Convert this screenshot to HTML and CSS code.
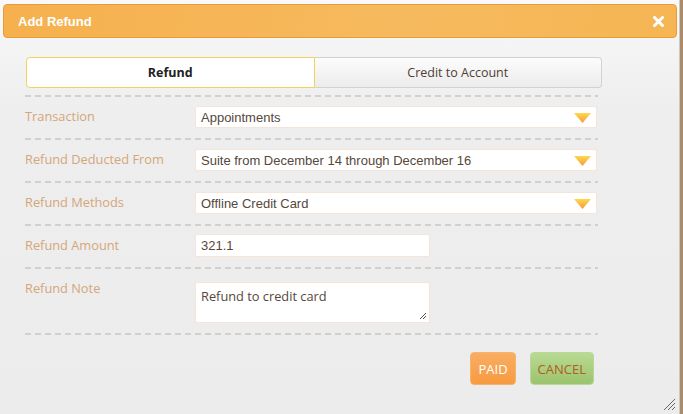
FILE: index.html
```html
<!DOCTYPE html>
<html lang="en">
<head>
    <meta charset="UTF-8">
    <title>Add Refund</title>
    <link rel="stylesheet" href="styles.css">
</head>
<body>
    <div class="dialog">
        <div class="titlebar">
            <span class="title">Add Refund</span>
            <svg class="close" width="11" height="11" viewBox="0 0 11 11">
                <path d="M1.5 1.5 L9.5 9.5 M9.5 1.5 L1.5 9.5" stroke="#fff" stroke-width="3" stroke-linecap="round"/>
            </svg>
        </div>

        <div class="content">
            <div class="tabs">
                <div class="tab active">Refund</div>
                <div class="tab">Credit to Account</div>
            </div>

            <div class="form">
                <div class="row">
                    <label>Transaction</label>
                    <div class="select">
                        <span>Appointments</span>
                        <svg class="arrow" width="17" height="10" viewBox="0 0 17 10"><use href="#tri"/></svg>
                    </div>
                </div>
                <div class="row">
                    <label>Refund Deducted From</label>
                    <div class="select">
                        <span>Suite from December 14 through December 16</span>
                        <svg class="arrow" width="17" height="10" viewBox="0 0 17 10"><use href="#tri"/></svg>
                    </div>
                </div>
                <div class="row">
                    <label>Refund Methods</label>
                    <div class="select">
                        <span>Offline Credit Card</span>
                        <svg class="arrow" width="17" height="10" viewBox="0 0 17 10"><use href="#tri"/></svg>
                    </div>
                </div>
                <div class="row">
                    <label>Refund Amount</label>
                    <div class="input">321.1</div>
                </div>
                <div class="row">
                    <label>Refund Note</label>
                    <div class="textarea">
                        Refund to credit card
                        <svg class="grip-small" width="8" height="8" viewBox="0 0 8 8">
                            <path d="M7 1 L1 7 M7 4 L4 7" stroke="#555" stroke-width="1"/>
                        </svg>
                    </div>
                </div>
                <div class="row last"></div>

                <div class="buttons">
                    <button class="btn paid">PAID</button>
                    <button class="btn cancel">CANCEL</button>
                </div>
            </div>
        </div>

        <svg class="grip" width="13" height="13" viewBox="0 0 13 13">
            <path d="M12 1 L1 12 M12 5 L5 12 M12 9 L9 12" stroke="#666" stroke-width="1"/>
        </svg>
    </div>

    <svg width="0" height="0" style="position:absolute">
        <defs>
            <linearGradient id="tg" x1="0" y1="0" x2="0" y2="1">
                <stop offset="0" stop-color="#ffd84a"/>
                <stop offset="1" stop-color="#f59a3e"/>
            </linearGradient>
            <path id="tri" d="M0 0 H17 L8.5 10 Z" fill="url(#tg)"/>
        </defs>
    </svg>
</body>
</html>
```

FILE: styles.css
```css
body {
    margin: 0;
    background-color: #a98d6b;
    font-family: "Open Sans", "Noto Sans", sans-serif;
}
.dialog {
    position: relative;
    width: 680px;
    height: 414px;
    box-sizing: border-box;
    padding-top: 4px;
    border-right: 1px solid #c9c9c9;
    background: linear-gradient(#f9f9f9, #eeeeee 110px, #ececec);
}
.titlebar {
    display: flex;
    align-items: center;
    justify-content: space-between;
    height: 34px;
    margin: 0 2px 0 3px;
    padding: 0 12px 0 14px;
    box-sizing: border-box;
    border: 1px solid #eb9a38;
    border-radius: 4px;
    background: linear-gradient(100deg, #f6b04e, #f6ba5e 60%, #f5b553);
}
.title {
    color: #fff;
    font-family: "Liberation Sans", Arial, sans-serif;
    font-weight: bold;
    font-size: 13px;
}
.close {
    margin-top: 1px;
}
.content {
    padding: 19px 0 0 25px;
}
.tabs {
    display: flex;
    width: 576px;
    height: 31px;
    margin-left: 1px;
}
.tab {
    flex: 1;
    display: flex;
    align-items: center;
    justify-content: center;
    font-size: 12.5px;
    color: #4e4034;
    box-sizing: border-box;
    border: 1px solid #d2d2d2;
    border-left: none;
    border-radius: 0 4px 4px 0;
    background: linear-gradient(#fcfcfc, #ececec);
}
.tab.active {
    border: 1.5px solid #f4d257;
    border-radius: 4px 0 0 4px;
    background: #fff;
    font-weight: bold;
    color: #222;
}
.form {
    width: 573px;
    margin-top: 7px;
}
.row {
    display: flex;
    align-items: flex-start;
    padding: 11px 0 10px;
    background: repeating-linear-gradient(90deg, #d3cfcb 0 6px, transparent 6px 10px) top left / 100% 2px no-repeat;
}
.row.last {
    padding: 0;
    height: 2px;
}
.row label {
    width: 170px;
    line-height: 21px;
    font-size: 12.8px;
    color: #d5a67a;
}
.select, .input, .textarea {
    box-sizing: border-box;
    background: #fff;
    border: 1px solid #f4e5d8;
    border-radius: 2px;
    font-family: "Liberation Sans", Arial, sans-serif;
    font-size: 13px;
    color: #56473a;
}
.select {
    display: flex;
    align-items: center;
    justify-content: space-between;
    width: 402px;
    height: 22px;
    padding: 0 5px 0 5px;
}
.arrow {
    margin-top: 1px;
}
.input {
    display: flex;
    align-items: center;
    width: 235px;
    height: 23px;
    margin-top: -1px;
    padding-left: 5px;
}
.textarea {
    position: relative;
    width: 235px;
    height: 41px;
    margin-top: 4px;
    padding: 4px 5px;
    font-family: "Open Sans", "Noto Sans", sans-serif;
    font-size: 12.8px;
    line-height: 18px;
}
.grip-small {
    position: absolute;
    right: 2px;
    bottom: 2px;
}
.buttons {
    display: flex;
    justify-content: flex-end;
    gap: 14px;
    margin-top: 17px;
    padding-right: 4px;
}
.btn {
    height: 33px;
    border-radius: 4px;
    font-family: "Open Sans", "Noto Sans", sans-serif;
    font-size: 13px;
    padding: 0 7px;
    cursor: pointer;
}
.btn.paid {
    color: #fff;
    border: 1px solid #f7b36d;
    background: linear-gradient(#f9ad63, #f79b3f);
}
.btn.cancel {
    color: #b35b22;
    border: 1px solid #bad79a;
    background: linear-gradient(#b8da92, #9cc36e);
}
.grip {
    position: absolute;
    right: 3px;
    bottom: 3px;
}
```
